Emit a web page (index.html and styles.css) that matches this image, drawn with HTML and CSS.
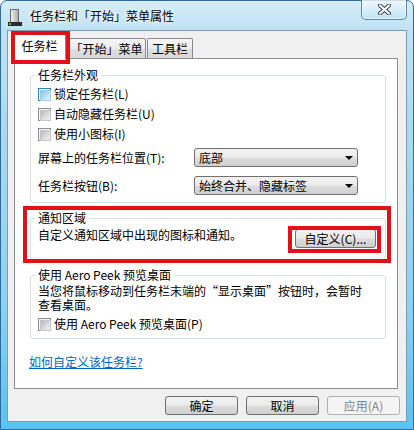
FILE: index.html
```html
<!DOCTYPE html>
<html lang="zh-CN">
<head>
<meta charset="utf-8">
<title>任务栏和「开始」菜单属性</title>
<link rel="stylesheet" href="styles.css">
</head>
<body>
<div class="window">
  <div class="titlebar">
    <svg class="app-icon" width="14" height="18" viewBox="0 0 14 18">
      <defs>
        <linearGradient id="ig" x1="0" y1="0" x2="1" y2="0">
          <stop offset="0" stop-color="#f4f4f4"/>
          <stop offset="1" stop-color="#a9a9a9"/>
        </linearGradient>
      </defs>
      <rect x="2.5" y="0.5" width="8" height="13" fill="url(#ig)" stroke="#6b6b6b"/>
      <rect x="0" y="13" width="14" height="4" fill="#2b2b2b"/>
      <rect x="1" y="14" width="2" height="2" fill="#6cbf3c"/>
    </svg>
    <span class="title">任务栏和「开始」菜单属性</span>
    <button class="close" aria-label="关闭">
      <svg width="13" height="11" viewBox="0 0 13 11">
        <path d="M2 1.5 L11 9.5 M11 1.5 L2 9.5" stroke="#3f454c" stroke-width="4.2" stroke-linecap="round"/>
        <path d="M2 1.5 L11 9.5 M11 1.5 L2 9.5" stroke="#ffffff" stroke-width="2.2" stroke-linecap="round"/>
      </svg>
    </button>
  </div>

  <div class="client">
    <div class="tabs">
      <div class="tab active">任务栏</div>
      <div class="tab tab-start">「开始」菜单</div>
      <div class="tab tab-tools">工具栏</div>
    </div>

    <div class="panel">
      <fieldset class="group group-look">
        <legend>任务栏外观</legend>
        <div class="check-row"><span class="cb hot"></span><span>锁定任务栏(L)</span></div>
        <div class="check-row"><span class="cb"></span><span>自动隐藏任务栏(U)</span></div>
        <div class="check-row"><span class="cb"></span><span>使用小图标(I)</span></div>
        <div class="select-row first">
          <span class="select-label">屏幕上的任务栏位置(T):</span>
          <div class="combo"><span>底部</span><span class="arrow"></span></div>
        </div>
        <div class="select-row">
          <span class="select-label">任务栏按钮(B):</span>
          <div class="combo"><span>始终合并、隐藏标签</span><span class="arrow"></span></div>
        </div>
      </fieldset>

      <fieldset class="group group-notify">
        <legend>通知区域</legend>
        <div class="notify-row">
          <span>自定义通知区域中出现的图标和通知。</span>
          <button class="btn btn-custom">自定义(C)...</button>
        </div>
      </fieldset>

      <fieldset class="group group-peek">
        <legend>使用 Aero Peek 预览桌面</legend>
        <p class="peek-text">当您将鼠标移动到任务栏末端的“显示桌面”按钮时，会暂时<br>查看桌面。</p>
        <div class="check-row"><span class="cb"></span><span>使用 Aero Peek 预览桌面(P)</span></div>
      </fieldset>

      <a class="help-link" href="#">如何自定义该任务栏?</a>
    </div>

    <div class="actions">
      <button class="btn">确定</button>
      <button class="btn">取消</button>
      <button class="btn disabled">应用(A)</button>
    </div>

    <div class="mark mark-tab"></div>
    <div class="mark mark-group"></div>
    <div class="mark mark-button"></div>
  </div>
</div>
</body>
</html>
```

FILE: styles.css
```css
* {
  box-sizing: border-box;
}

html,
body {
  margin: 0;
  padding: 0;
}

body {
  width: 414px;
  height: 430px;
  overflow: hidden;
  background: #ffffff;
  font-family: "Noto Sans CJK SC", "Noto Sans", sans-serif;
  font-size: 12px;
  color: #000000;
}

.window {
  width: 414px;
  height: 430px;
  display: flex;
  flex-direction: column;
  border: 1px solid #2d6d9c;
  border-radius: 7px 7px 0 0;
  padding: 0 6px 7px 6px;
  background: linear-gradient(180deg, #d6edf8 0%, #bfe2f4 7%, #a7d8f0 35%, #8fd1f1 70%, #58c3f2 100%);
}

.titlebar {
  height: 29px;
  flex: none;
  display: flex;
  align-items: center;
}

.app-icon {
  margin-left: 1px;
  margin-top: 4px;
  flex: none;
}

.title {
  margin-left: 8px;
  line-height: 14px;
  text-shadow: 0 0 6px #ffffff, 0 0 3px #ffffff;
}

.close {
  margin-left: auto;
  margin-right: 0;
  align-self: flex-start;
  margin-top: -1px;
  width: 46px;
  height: 20px;
  padding: 0;
  border: 1px solid #5f88a6;
  border-top: none;
  border-radius: 0 0 5px 5px;
  background: linear-gradient(180deg, rgba(255, 255, 255, 0.55) 0%, rgba(230, 245, 252, 0.35) 50%, rgba(180, 222, 242, 0.3) 100%);
  box-shadow: inset 0 0 0 1px rgba(255, 255, 255, 0.5);
  display: flex;
  align-items: center;
  justify-content: center;
}

.client {
  position: relative;
  flex: 1;
  display: flex;
  flex-direction: column;
  background: #f0f0f0;
  border: 1px solid #7c9cb3;
}

.tabs {
  display: flex;
  align-items: flex-end;
  height: 27px;
  margin-top: 1px;
  padding-left: 5px;
}

.tab {
  height: 20px;
  margin-bottom: 1px;
  margin-left: 1px;
  display: flex;
  align-items: center;
  justify-content: center;
  border: 1px solid #898c95;
  border-bottom: none;
  border-radius: 2px 2px 0 0;
  background: linear-gradient(180deg, #f7f7f7 0%, #ececec 50%, #e0e0e0 51%, #d8d8d8 100%);
  line-height: 14px;
}

.tab.active {
  position: relative;
  z-index: 1;
  height: 27px;
  width: 53px;
  margin-left: 0;
  margin-bottom: 0;
  background: #ffffff;
}

.tab-start {
  width: 79px;
}

.tab-tools {
  width: 46px;
}

.panel {
  margin-top: -1px;
  margin-left: 6px;
  width: 384px;
  height: 331px;
  flex: none;
  border: 1px solid #898c95;
  background: #ffffff;
  padding: 9px 11px 0 15px;
  display: flex;
  flex-direction: column;
}

.group {
  margin: 0;
  min-width: 0;
  border: 1px solid #d5dfe5;
  border-radius: 3px;
  padding: 0 7px 7px 7px;
}

.group legend {
  margin-left: -3px;
  padding: 0 3px;
  line-height: 14px;
  height: 14px;
}

.check-row {
  height: 20px;
  display: flex;
  align-items: center;
  gap: 3px;
  line-height: 14px;
}

.group-look .check-row:first-of-type {
  margin-top: 2px;
}

.cb {
  width: 13px;
  height: 13px;
  flex: none;
  border: 1px solid #8e8f8f;
  background: #f4f4f4;
  padding: 1px;
  display: block;
}

.cb::after {
  content: "";
  display: block;
  width: 9px;
  height: 9px;
  border: 1px solid #c4c6c9;
  background: linear-gradient(135deg, #b3b7bb 0%, #dadcdd 55%, #f3f3f3 100%);
}

.cb.hot {
  border-color: #3c7fb1;
  background: #e9f5fc;
}

.cb.hot::after {
  border-color: #9ecdea;
  background: linear-gradient(135deg, #7fc0ea 0%, #b9e0f6 55%, #e8f6fd 100%);
}

.select-row {
  display: grid;
  grid-template-columns: 156px 164px;
  align-items: center;
  height: 19px;
  margin-top: 9px;
  line-height: 14px;
}

.select-row.first {
  margin-top: 4px;
}

.combo {
  height: 19px;
  border: 1px solid #707070;
  border-radius: 3px;
  background: linear-gradient(180deg, #f2f2f2 0%, #ebebeb 48%, #dddddd 52%, #cfcfcf 100%);
  display: flex;
  align-items: center;
  justify-content: space-between;
  padding: 0 4px 0 4px;
}

.arrow {
  width: 0;
  height: 0;
  border-left: 4px solid transparent;
  border-right: 4px solid transparent;
  border-top: 4px solid #000000;
  margin-right: 0;
}

.group-notify {
  margin-top: 8px;
  padding-bottom: 11px;
}

.notify-row {
  display: flex;
  align-items: flex-start;
  justify-content: space-between;
  padding-top: 3px;
  line-height: 14px;
}

.btn {
  height: 19px;
  width: 73px;
  padding: 0;
  border: 1px solid #707070;
  border-radius: 3px;
  background: linear-gradient(180deg, #f2f2f2 0%, #ebebeb 48%, #dddddd 52%, #cfcfcf 100%);
  font-family: inherit;
  font-size: 12px;
  line-height: 14px;
  color: #000000;
}

.btn-custom {
  width: 81px;
  margin-top: 1px;
  margin-right: 2px;
}

.btn.disabled {
  border-color: #adb2b5;
  background: #f4f4f4;
  color: #838383;
}

.group-peek {
  margin-top: 8px;
  padding-bottom: 4px;
}

.peek-text {
  margin: 2px 0 0 0;
  line-height: 14px;
}

.group-peek .check-row {
  margin-top: 2px;
}

.help-link {
  margin-top: 16px;
  margin-left: -1px;
  align-self: flex-start;
  line-height: 14px;
  color: #0066cc;
  text-decoration: underline;
}

.actions {
  display: flex;
  justify-content: flex-end;
  gap: 8px;
  margin-top: 7px;
  padding-right: 6px;
}

.mark {
  position: absolute;
  border: 4px solid #e3101a;
  pointer-events: none;
  z-index: 5;
}

.mark-tab {
  left: 3px;
  top: 0;
  width: 59px;
  height: 33px;
}

.mark-group {
  left: 15px;
  top: 175px;
  width: 368px;
  height: 57px;
}

.mark-button {
  left: 280px;
  top: 195px;
  width: 93px;
  height: 27px;
}
```
